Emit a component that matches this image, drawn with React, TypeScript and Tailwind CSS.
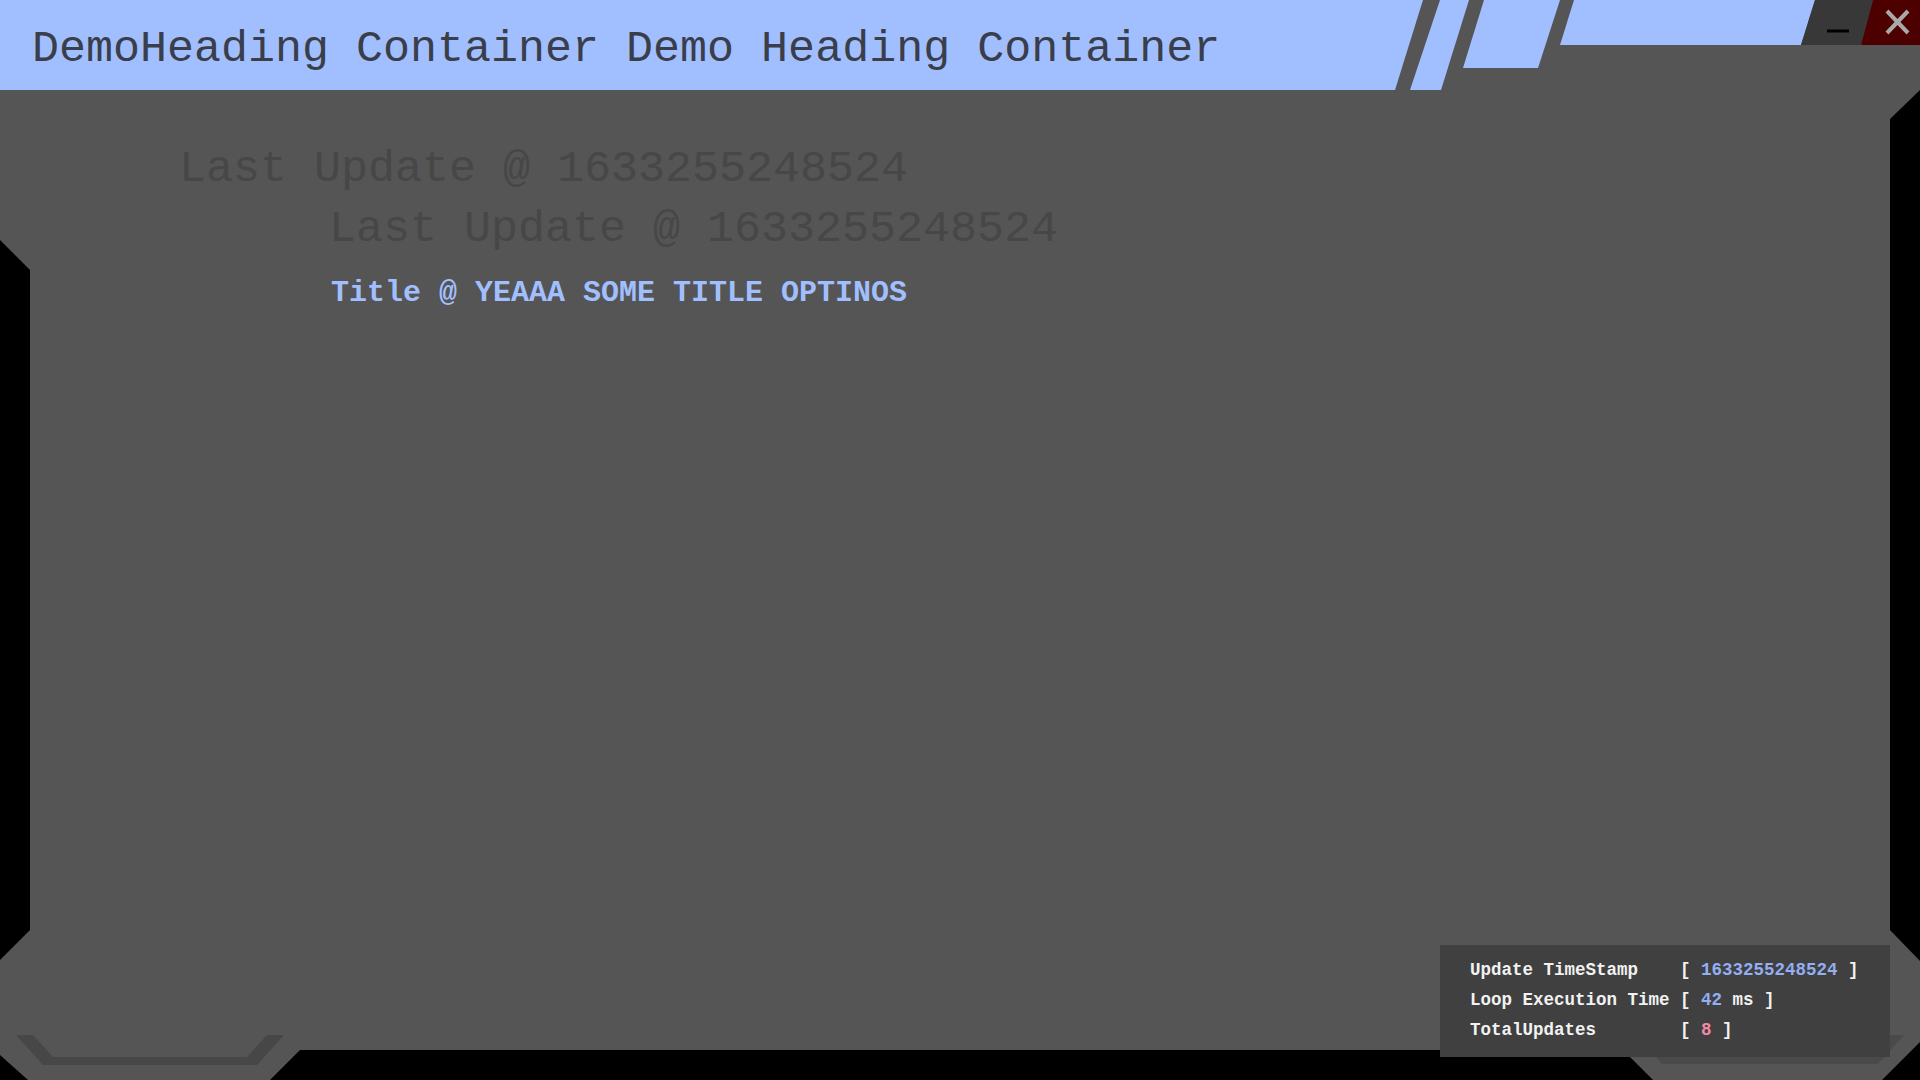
import React from 'react';

const mono = { fontFamily: '"Liberation Mono", "Courier New", monospace' };

// frame decoration behind everything
function Frame() {
  return (
    <svg className="absolute inset-0" width={1920} height={1080} viewBox="0 0 1920 1080">
      <polygon points="0,240 30,270 30,930 0,960" fill="#000" />
      <polygon points="1920,90 1890,119 1890,930 1920,961" fill="#000" />
      <polygon points="270,1080 300,1050 1623,1050 1653,1080" fill="#000" />
      <polygon points="0,1055 28,1080 0,1080" fill="#000" />
      <polygon points="1920,1042 1920,1080 1882,1080" fill="#000" />
      <polygon points="16,1035 33,1035 53,1057 247,1057 267,1035 284,1035 257,1065 43,1065" fill="#474747" />
      <polygon points="1890,1035 1904,1035 1878,1064 1662,1064 1656,1057 1890,1057" fill="#4a4a4a" />
    </svg>
  );
}

function HeaderDeco() {
  return (
    <svg width={540} height={90} viewBox="0 0 540 90" className="shrink-0">
      <polygon points="0,0 43,0 15,90 0,90" fill="#a1bfff" />
      <polygon points="60,0 89,0 61,90 30,90" fill="#a1bfff" />
      <polygon points="104,0 180,0 158,68 83,68" fill="#a1bfff" />
      <polygon points="194,0 435,0 421,45 180,45" fill="#a1bfff" />
      <polygon points="435,0 493,0 481,45 421,45" fill="#383838" />
      <line x1={447} y1={31} x2={469} y2={31} stroke="#000" strokeWidth={3} />
      <polygon points="493,0 540,0 540,45 481,45" fill="#4d0000" />
      <path d="M507 11 L528 33 M528 11 L507 33" stroke="#a9a9a9" strokeWidth={4} />
    </svg>
  );
}

export default function App() {
  return (
    <div className="relative w-[1920px] h-[1080px] overflow-hidden bg-[#555555]" style={mono}>
      <Frame />
      <div className="relative z-10 flex flex-col h-full">
        {/* Header */}
        <div className="flex h-[90px]">
          <div className="flex-1 bg-[#a1bfff] flex items-center pl-[32px] pt-[8px]">
            <h1 className="text-[45px] leading-none text-[#3a3e4a] whitespace-pre">
              DemoHeading Container Demo Heading Container
            </h1>
          </div>
          <HeaderDeco />
        </div>

        {/* Content */}
        <div className="pl-[179px] pt-[50px]">
          <p className="text-[45px] leading-[60px] text-[#474747] whitespace-pre">Last Update @ 1633255248524</p>
          <p className="ml-[150px] text-[45px] leading-[60px] text-[#474747] whitespace-pre">Last Update @ 1633255248524</p>
          <p className="ml-[152px] mt-[13px] text-[30px] leading-[40px] font-bold text-[#a1bfff] whitespace-pre">
            Title @ YEAAA SOME TITLE OPTINOS
          </p>
        </div>

        {/* Stats */}
        <div className="mt-auto self-end mr-[30px] mb-[23px] w-[450px] h-[112px] bg-[#404040] pl-[30px] pt-[10px] text-[17.5px] leading-[30px] font-bold text-[#f2f2f2] whitespace-pre">
          <div>Update TimeStamp    [ <span className="text-[#94aef2]">1633255248524</span> ]</div>
          <div>Loop Execution Time [ <span className="text-[#94aef2]">42</span> ms ]</div>
          <div>TotalUpdates        [ <span className="text-[#f28aa6]">8</span> ]</div>
        </div>
      </div>
    </div>
  );
}
